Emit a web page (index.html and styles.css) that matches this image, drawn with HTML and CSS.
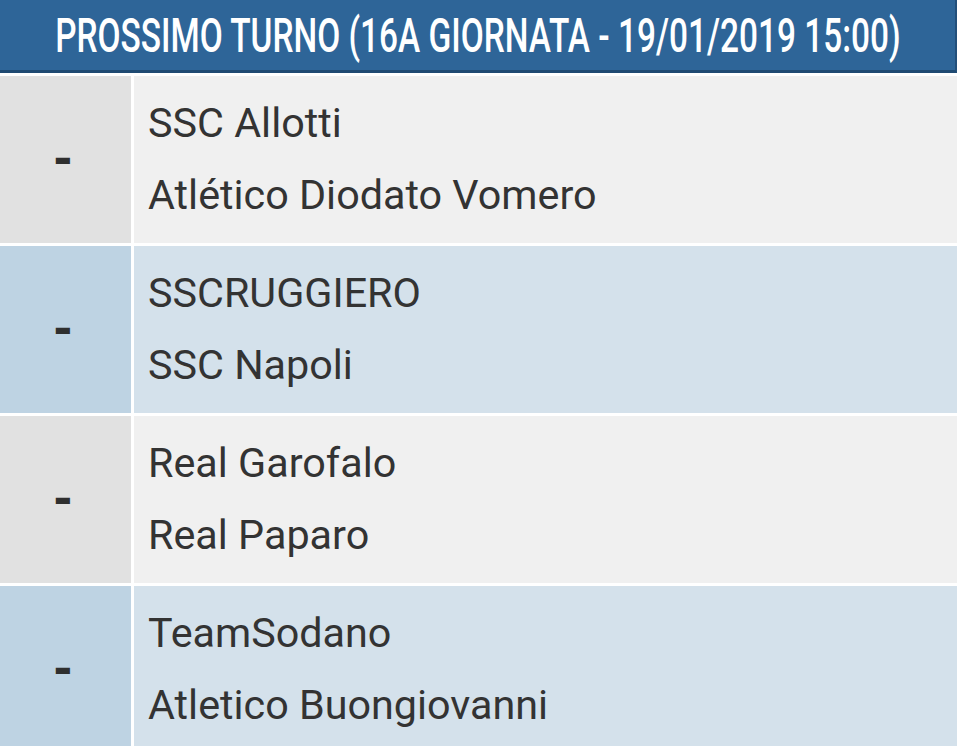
FILE: index.html
```html
<!DOCTYPE html>
<html lang="it">
<head>
<meta charset="utf-8">
<title>Prossimo turno</title>
<link rel="stylesheet" href="styles.css">
</head>
<body>
<div class="board">
  <div class="header"><span class="title">PROSSIMO TURNO (16A GIORNATA - 19/01/2019 15:00)</span></div>
  <div class="match odd">
    <div class="score">-</div>
    <div class="teams"><div class="team">SSC Allotti</div><div class="team">Atlético Diodato Vomero</div></div>
  </div>
  <div class="match even">
    <div class="score">-</div>
    <div class="teams"><div class="team">SSCRUGGIERO</div><div class="team">SSC Napoli</div></div>
  </div>
  <div class="match odd">
    <div class="score">-</div>
    <div class="teams"><div class="team">Real Garofalo</div><div class="team">Real Paparo</div></div>
  </div>
  <div class="match even">
    <div class="score">-</div>
    <div class="teams"><div class="team">TeamSodano</div><div class="team">Atletico Buongiovanni</div></div>
  </div>
</div>
</body>
</html>
```
FILE: styles.css
```css
html, body {
  margin: 0;
  padding: 0;
  background: #ffffff;
  overflow: hidden;
}
.board {
  width: 957px;
  display: flex;
  flex-direction: column;
  gap: 3px;
  font-family: Roboto, "Liberation Sans", sans-serif;
}
.header {
  height: 70px;
  background: #2e6598;
  border-bottom: 3px solid #1f4a72;
  border-right: 2px solid #234f7a;
  display: flex;
  align-items: center;
  justify-content: center;
}
.title {
  flex: none;
  display: inline-block;
  color: #ffffff;
  font-size: 49px;
  font-weight: 500;
  white-space: nowrap;
  transform: scaleX(0.682);
}
.match {
  display: grid;
  grid-template-columns: 131px 1fr;
  column-gap: 3px;
  height: 167px;
}
.score {
  display: flex;
  align-items: center;
  justify-content: center;
  font-size: 48px;
  font-weight: 900;
  color: #2f2f2f;
  padding-right: 5px;
}
.teams {
  padding: 11px 0 0 14px;
  color: #333333;
  font-size: 41.3px;
  line-height: 72px;
}
.odd .score { background: #e1e1e1; }
.odd .teams { background: #f0f0f0; }
.even .score { background: #bed3e3; }
.even .teams { background: #d4e1eb; }
```
